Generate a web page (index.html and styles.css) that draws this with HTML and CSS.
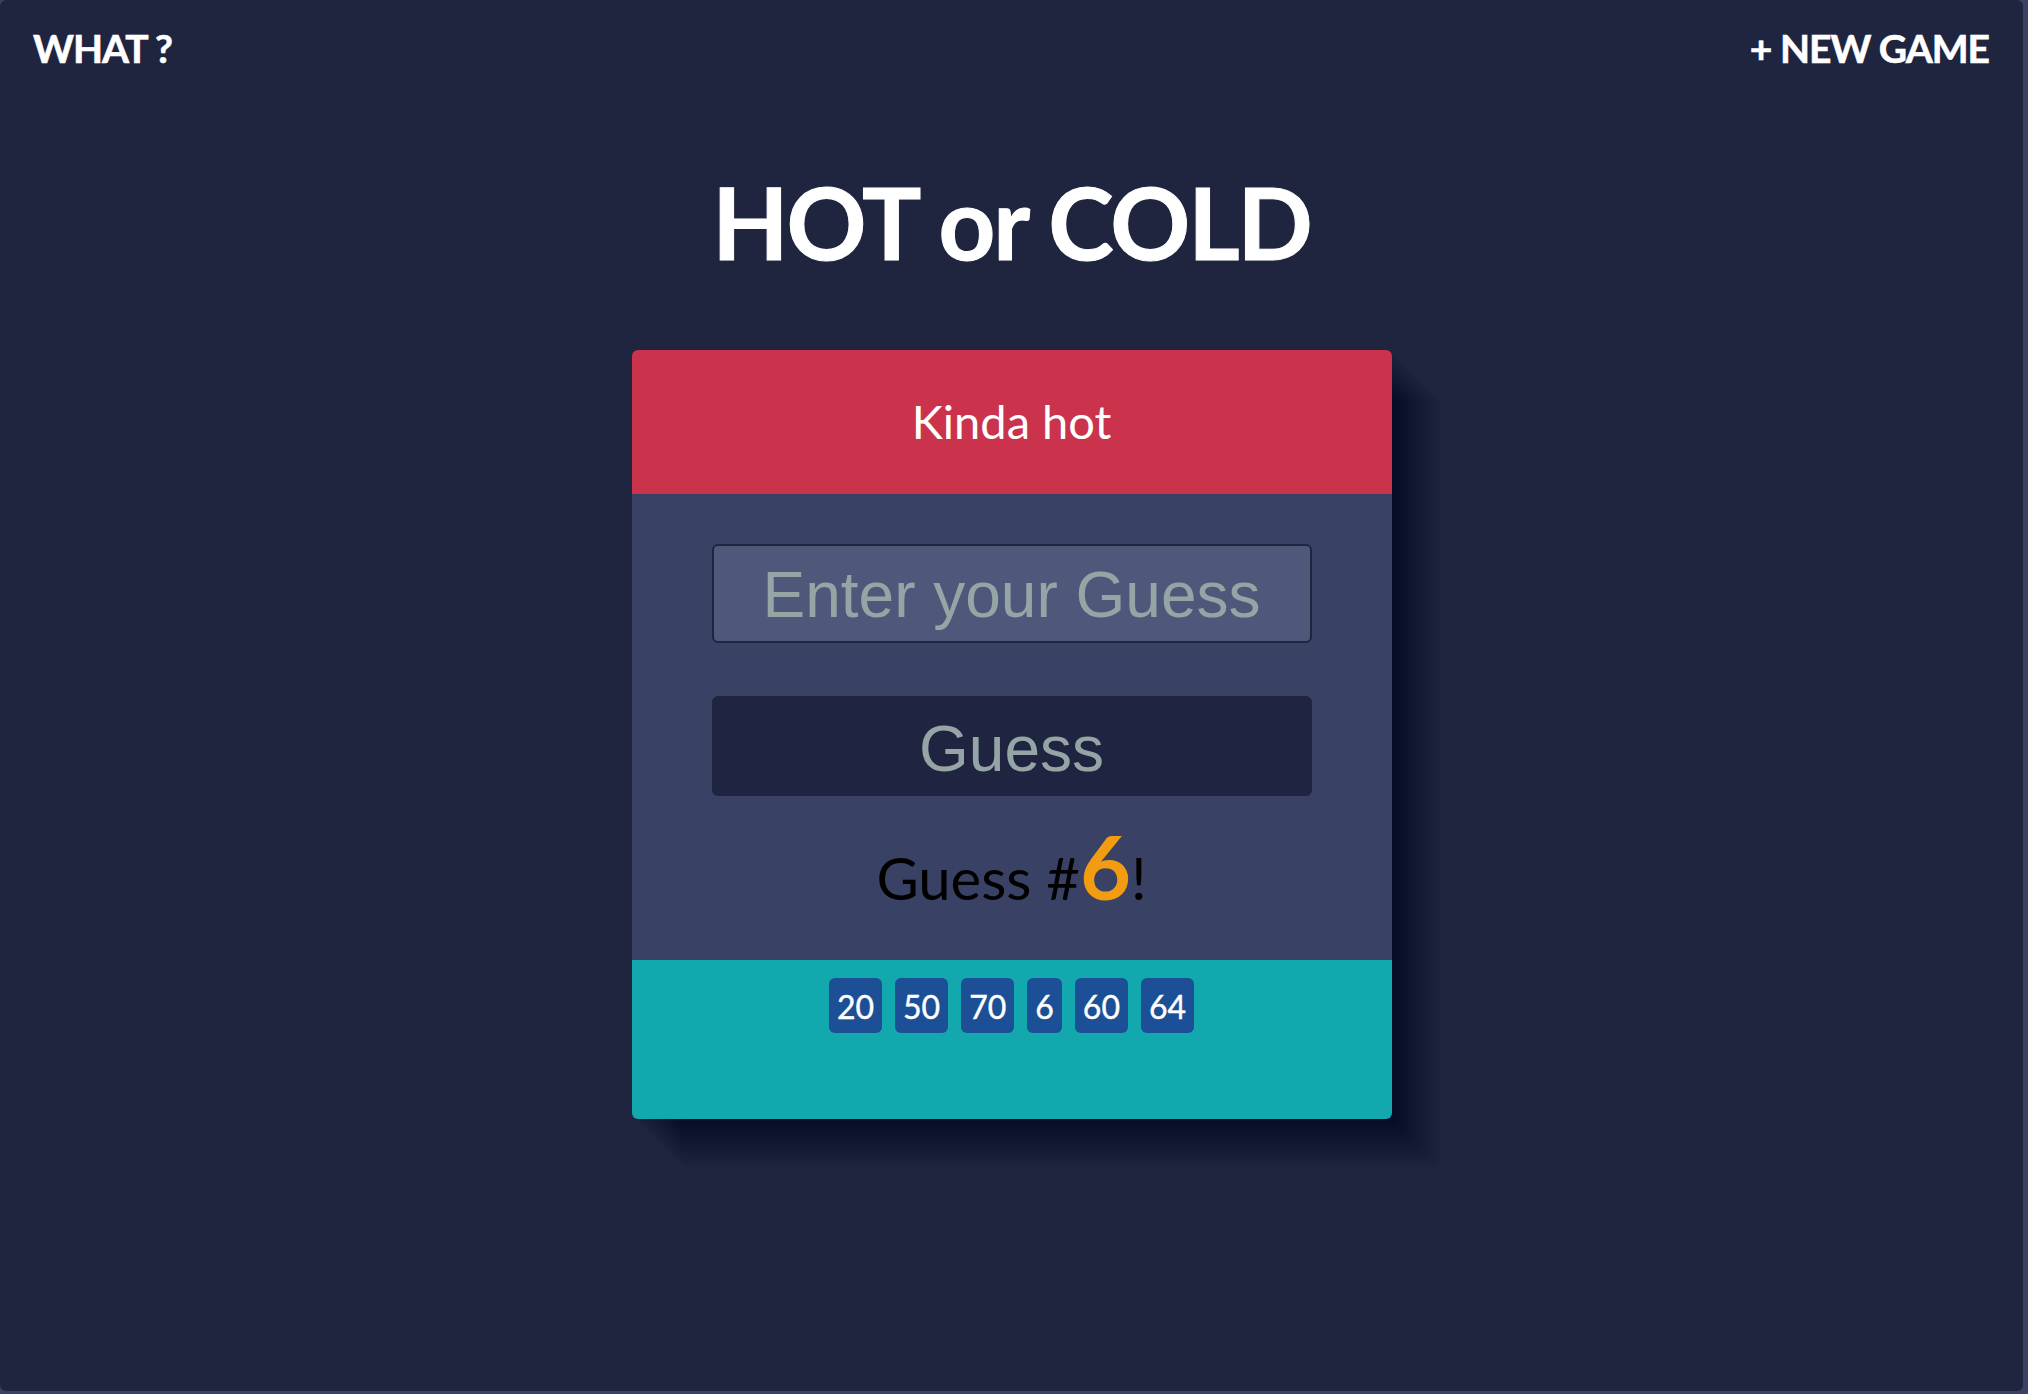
FILE: index.html
```html
<!DOCTYPE html>
<html lang="en">
<head>
<meta charset="utf-8">
<title>Hot or Cold</title>
<link rel="stylesheet" href="styles.css">
</head>
<body>
<div class="page">
  <nav class="nav">
    <a class="nav-link">WHAT ?</a>
    <a class="nav-link">+ NEW GAME</a>
  </nav>
  <h1 class="title">HOT or COLD</h1>
  <section class="card">
    <header class="feedback">Kinda hot</header>
    <form class="guess-form">
      <input class="guess-input" type="text" placeholder="Enter your Guess">
      <button class="guess-button" type="button">Guess</button>
      <p class="count">Guess #<span class="count-num">6</span>!</p>
    </form>
    <ul class="history">
      <li class="chip">20</li>
      <li class="chip">50</li>
      <li class="chip">70</li>
      <li class="chip">6</li>
      <li class="chip">60</li>
      <li class="chip">64</li>
    </ul>
  </section>
</div>
</body>
</html>
```
FILE: styles.css
```css
html {
  background: #3a4264;
}
body {
  margin: 0;
  font-family: "Lato", "Open Sans", sans-serif;
}
.page {
  width: 2023px;
  height: 1391px;
  background: #20253f;
  border-radius: 6px;
  overflow: hidden;
  display: flex;
  flex-direction: column;
  align-items: center;
}
.nav {
  align-self: stretch;
  display: flex;
  justify-content: space-between;
  padding: 25px 34px 0 33px;
}
.nav-link {
  color: #ffffff;
  font-weight: 700;
  font-size: 39px;
  line-height: 47px;
  letter-spacing: -1px;
  -webkit-text-stroke: 0.6px #ffffff;
}
.title {
  margin: 90px 0 0;
  color: #ffffff;
  font-weight: 700;
  font-size: 99px;
  line-height: 119px;
  letter-spacing: -2px;
  -webkit-text-stroke: 1px #ffffff;
}
.card {
  margin-top: 69px;
  width: 760px;
  border-radius: 6px;
  box-shadow:
    2px 2px rgba(16,18,28,.014), 4px 4px rgba(16,18,28,.014), 6px 6px rgba(16,18,28,.014),
    8px 8px rgba(16,18,28,.014), 10px 10px rgba(16,18,28,.014), 12px 12px rgba(16,18,28,.014),
    14px 14px rgba(16,18,28,.014), 16px 16px rgba(16,18,28,.014), 18px 18px rgba(16,18,28,.014),
    20px 20px rgba(16,18,28,.014), 22px 22px rgba(16,18,28,.014), 24px 24px rgba(16,18,28,.014),
    26px 26px rgba(16,18,28,.014), 28px 28px rgba(16,18,28,.014), 30px 30px rgba(16,18,28,.014),
    32px 32px rgba(16,18,28,.014), 34px 34px rgba(16,18,28,.014), 36px 36px rgba(16,18,28,.014),
    38px 38px rgba(16,18,28,.014), 40px 40px rgba(16,18,28,.014), 42px 42px rgba(16,18,28,.014),
    44px 44px rgba(16,18,28,.014), 46px 46px rgba(16,18,28,.014), 48px 48px rgba(16,18,28,.014),
    50px 50px rgba(16,18,28,.014);
}
.feedback {
  height: 144px;
  display: flex;
  align-items: center;
  justify-content: center;
  background: #cb334c;
  color: #ffffff;
  font-size: 47px;
  padding-bottom: 2px;
  box-sizing: border-box;
  border-radius: 6px 6px 0 0;
}
.guess-form {
  margin: 0;
  height: 466px;
  box-sizing: border-box;
  padding-top: 50px;
  background: #394165;
  display: flex;
  flex-direction: column;
  align-items: center;
}
.guess-input {
  box-sizing: border-box;
  width: 600px;
  height: 99px;
  margin: 0;
  padding: 2px 0 0;
  border: 2px solid #1f2540;
  border-radius: 6px;
  background: #4f587a;
  color: #95a5a6;
  font-family: "Liberation Sans", Arial, sans-serif;
  font-size: 64px;
  text-align: center;
  outline: none;
}
.guess-input::placeholder {
  color: #95a5a6;
  opacity: 1;
}
.guess-button {
  box-sizing: border-box;
  width: 600px;
  height: 100px;
  margin-top: 53px;
  padding: 6px 0 0;
  border: none;
  border-radius: 6px;
  background: #1f2440;
  color: #95a5a6;
  font-family: "Liberation Sans", Arial, sans-serif;
  font-size: 64px;
  line-height: 94px;
}
.count {
  margin: 30px 0 0;
  color: #000000;
  font-size: 58px;
  line-height: 80px;
}
.count-num {
  color: #f39c12;
  font-weight: 700;
  font-size: 88px;
}
.history {
  margin: 0;
  padding: 18px 0 0;
  list-style: none;
  height: 159px;
  box-sizing: border-box;
  background: #12a8ad;
  border-radius: 0 0 6px 6px;
  display: flex;
  justify-content: center;
  align-items: flex-start;
  gap: 13px;
}
.chip {
  height: 55px;
  box-sizing: border-box;
  padding: 3px 8px 0;
  border-radius: 6px;
  background: #1c4f95;
  color: #ffffff;
  font-size: 32px;
  line-height: 52px;
  -webkit-text-stroke: 0.4px #ffffff;
}
```
